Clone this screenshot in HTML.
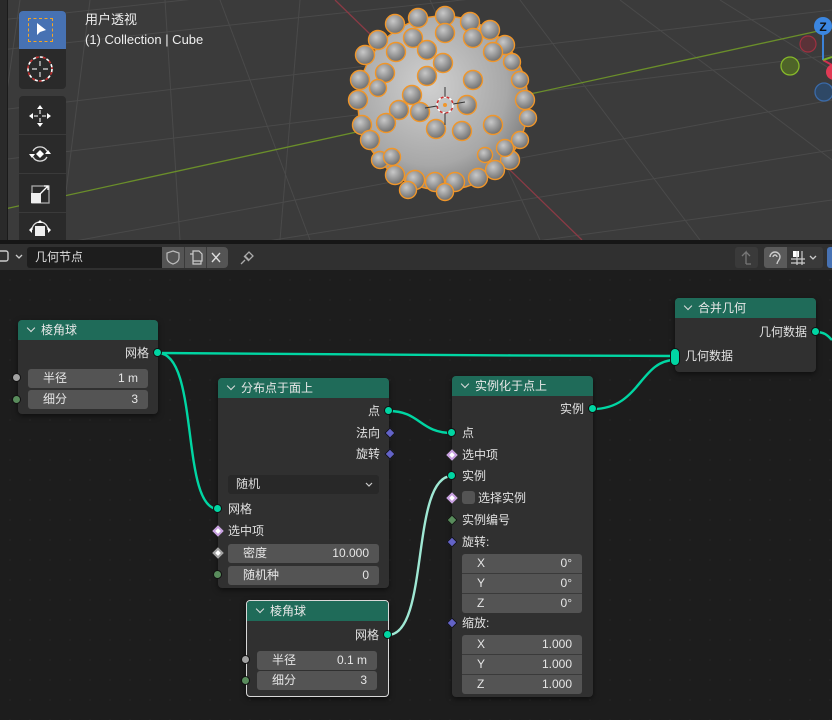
<!DOCTYPE html>
<html><head><meta charset="utf-8">
<style>
*{margin:0;padding:0;box-sizing:border-box}
body{width:832px;height:720px;overflow:hidden;background:#1d1d1d;font-family:"Liberation Sans","Noto Sans CJK SC",sans-serif;font-size:12px;color:#e0e0e0;position:relative}
.a{position:absolute}
.node{position:absolute;background:#303030;border-radius:4px;box-shadow:0 2px 6px rgba(0,0,0,.5)}
.hd{height:20px;background:#1f6b59;border-radius:4px 4px 0 0;padding-left:8px;line-height:20px;color:#e8e8e8;font-size:12px}
.hd .chev{display:inline-block;width:6px;height:6px;border-right:1.3px solid #ddd;border-bottom:1.3px solid #ddd;transform:rotate(45deg);margin:0 7px 3px 2px}
.lbl{position:absolute;line-height:14px;font-size:12px;color:#e0e0e0;white-space:nowrap}
.r{text-align:right}
.f{position:absolute;background:#545454;border-radius:3px;height:19px;line-height:19px;font-size:12px;color:#e6e6e6;padding:0 10px 0 15px}
.f span{float:right}
.s{position:absolute;width:9px;height:9px;border-radius:50%;background:#00d6a3;border:1px solid #111}
.d{position:absolute;width:8px;height:8px;transform:rotate(45deg);border:1px solid #111}
</style></head><body>
<div class="a" style="left:0;top:0;width:832px;height:240px;background:#3b3b3b;overflow:hidden">
<svg class="a" style="left:0;top:0" width="832" height="240">
<g stroke="#4a4a4a" stroke-width="1" fill="none">
<line x1="0" y1="50" x2="832" y2="-40"/><line x1="0" y1="110" x2="832" y2="10"/><line x1="0" y1="160" x2="832" y2="55"/>
<line x1="0" y1="255" x2="832" y2="100"/><line x1="150" y1="260" x2="832" y2="150"/><line x1="400" y1="260" x2="832" y2="200"/>
<line x1="0" y1="20" x2="832" y2="-70"/>
<line x1="60" y1="240" x2="90" y2="0"/><line x1="165" y1="0" x2="180" y2="240"/><line x1="280" y1="240" x2="300" y2="0"/>
<line x1="220" y1="0" x2="310" y2="240"/><line x1="520" y1="0" x2="700" y2="240"/><line x1="620" y1="0" x2="832" y2="160"/>
<line x1="720" y1="0" x2="832" y2="70"/><line x1="430" y1="0" x2="540" y2="240"/><line x1="0" y1="140" x2="20" y2="0"/>
</g>
<line x1="0" y1="210" x2="832" y2="28" stroke="#6a8e2a" stroke-width="1.3"/>
<line x1="335" y1="0" x2="582" y2="240" stroke="#8a3a45" stroke-width="1.3"/>
<defs><radialGradient id="sg" cx="0.42" cy="0.4" r="0.65"><stop offset="0" stop-color="#d0d0d0"/><stop offset="0.7" stop-color="#a8a8a8"/><stop offset="1" stop-color="#7a7a7a"/></radialGradient>
<radialGradient id="bg" cx="0.4" cy="0.35" r="0.7"><stop offset="0" stop-color="#c8c8c8"/><stop offset="1" stop-color="#6a6a6a"/></radialGradient></defs>
<ellipse cx="443" cy="103" rx="85" ry="87" fill="url(#sg)" stroke="#f0962a" stroke-width="1.5"/>
<g fill="url(#bg)" stroke="#f0962a" stroke-width="1.4">
<circle cx="418" cy="18" r="9.5"/><circle cx="445" cy="16" r="9.5"/><circle cx="470" cy="22" r="9.5"/><circle cx="490" cy="30" r="9.5"/><circle cx="395" cy="24" r="9.5"/><circle cx="378" cy="40" r="9.5"/>
<circle cx="505" cy="45" r="9.5"/><circle cx="512" cy="62" r="8.5"/><circle cx="365" cy="55" r="9.5"/><circle cx="360" cy="80" r="9.5"/><circle cx="358" cy="100" r="9.5"/>
<circle cx="520" cy="80" r="8.5"/><circle cx="525" cy="100" r="9.5"/><circle cx="528" cy="118" r="8.5"/><circle cx="362" cy="125" r="9.5"/><circle cx="370" cy="140" r="9.5"/>
<circle cx="520" cy="140" r="8.5"/><circle cx="510" cy="160" r="9.5"/><circle cx="380" cy="160" r="8.5"/><circle cx="395" cy="175" r="9.5"/><circle cx="415" cy="180" r="9.5"/>
<circle cx="435" cy="182" r="9.5"/><circle cx="455" cy="182" r="9.5"/><circle cx="478" cy="178" r="9.5"/><circle cx="495" cy="170" r="9.5"/><circle cx="408" cy="190" r="8.5"/><circle cx="445" cy="192" r="8.5"/>
<circle cx="413" cy="38" r="9.5"/><circle cx="445" cy="33" r="9.5"/><circle cx="473" cy="38" r="9.5"/><circle cx="396" cy="52" r="9.5"/><circle cx="427" cy="50" r="9.5"/><circle cx="493" cy="52" r="9.5"/>
<circle cx="427" cy="76" r="9.5"/><circle cx="443" cy="63" r="9.5"/><circle cx="385" cy="73" r="9.5"/><circle cx="473" cy="80" r="9.5"/><circle cx="412" cy="95" r="9.5"/>
<circle cx="399" cy="110" r="9.5"/><circle cx="420" cy="112" r="9.5"/><circle cx="467" cy="105" r="9.5"/><circle cx="386" cy="123" r="9.5"/><circle cx="436" cy="129" r="9.5"/>
<circle cx="462" cy="131" r="9.5"/><circle cx="493" cy="125" r="9.5"/><circle cx="378" cy="88" r="8.5"/><circle cx="505" cy="148" r="8.5"/><circle cx="485" cy="155" r="7.5"/><circle cx="392" cy="157" r="8.5"/>
</g>
<circle cx="445" cy="105" r="8" fill="none" stroke="#fff" stroke-width="1.5" stroke-dasharray="3 3"/>
<circle cx="445" cy="105" r="8" fill="none" stroke="#d03030" stroke-width="1.5" stroke-dasharray="3 3" stroke-dashoffset="3"/>
<circle cx="445" cy="105" r="2" fill="#f0962a"/>
<g stroke="#333" stroke-width="1"><line x1="445" y1="87" x2="445" y2="97"/><line x1="445" y1="113" x2="445" y2="125"/><line x1="425" y1="108" x2="437" y2="106"/><line x1="453" y1="104" x2="465" y2="102"/></g>
<line x1="823" y1="26" x2="823" y2="60" stroke="#3b82d8" stroke-width="2"/>
<line x1="823" y1="60" x2="832" y2="65" stroke="#d03050" stroke-width="2"/>
<line x1="823" y1="60" x2="832" y2="57" stroke="#7ab02a" stroke-width="2"/>
<circle cx="808" cy="44" r="8" fill="#5a3238" stroke="#a03040" stroke-width="1.2"/>
<circle cx="790" cy="66" r="9" fill="#4e6428" stroke="#86b82a" stroke-width="1.3"/>
<circle cx="824" cy="92" r="9" fill="#2e4866" stroke="#3a6aa8" stroke-width="1.3"/>
<circle cx="834" cy="72" r="8" fill="#e03a55"/>
<circle cx="823" cy="26" r="9" fill="#3b86e0"/>
<text x="823" y="31" font-size="12" font-weight="bold" fill="#111" text-anchor="middle" font-family="Liberation Sans">Z</text>
</svg>
<div class="a" style="left:0;top:0;width:8px;height:240px;background:#2a2a2a;border-right:1px solid #1a1a1a"></div>
<div class="a" style="left:85px;top:12px;font-size:13px;color:#eee;line-height:16px">用户透视</div>
<div class="a" style="left:85px;top:32px;font-size:13px;color:#eee;line-height:16px">(1) Collection | Cube</div>
<div class="a" style="left:19px;top:11px;width:47px;height:78px;background:#2a2a2a;border-radius:4px"></div>
<div class="a" style="left:19px;top:11px;width:47px;height:38px;background:#4772b3;border-radius:4px 4px 0 0"></div>
<div class="a" style="left:28px;top:18px;width:25px;height:24px;border:1.5px dashed #f5a623"></div>
<svg class="a" style="left:35px;top:22px" width="12" height="14"><path d="M2 1 L2 13 L5 10 L11 8 Z" fill="#fff"/></svg>
<svg class="a" style="left:26px;top:55px" width="28" height="28"><circle cx="14" cy="14" r="12" fill="none" stroke="#fff" stroke-width="1.6" stroke-dasharray="4 3"/><circle cx="14" cy="14" r="12" fill="none" stroke="#c03030" stroke-width="1.6" stroke-dasharray="3 4" stroke-dashoffset="4"/><path d="M14 6v5M14 17v5M6 14h5M17 14h5" stroke="#ddd" stroke-width="1.2"/></svg>
<div class="a" style="left:19px;top:96px;width:47px;height:150px;background:#2a2a2a;border-radius:4px"></div>
<div class="a" style="left:19px;top:134px;width:47px;height:1px;background:#3a3a3a"></div>
<div class="a" style="left:19px;top:173px;width:47px;height:1px;background:#3a3a3a"></div>
<div class="a" style="left:19px;top:212px;width:47px;height:1px;background:#3a3a3a"></div>
<svg class="a" style="left:26px;top:102px" width="28" height="28"><path d="M14 3l-3 4h6zM14 25l-3-4h6zM3 14l4-3v6zM25 14l-4-3v6z" fill="#fff"/><path d="M14 8v4M14 16v4M8 14h4M16 14h4" stroke="#ddd" stroke-width="1.3"/></svg>
<svg class="a" style="left:26px;top:140px" width="28" height="28"><path d="M7 11a8 8 0 0 1 14 0M21 17a8 8 0 0 1-14 0" fill="none" stroke="#ddd" stroke-width="1.3"/><path d="M14 10l4 4-4 4-4-4z M3 14h6l-3 4z M19 14h6l-3-4z" fill="#fff"/></svg>
<svg class="a" style="left:26px;top:180px" width="28" height="28"><rect x="6" y="6" width="17" height="17" fill="none" stroke="#aaa" stroke-width="1.3"/><rect x="5" y="13" width="10" height="10" fill="#eee"/><path d="M14 14l8-8M18 6h4v4" stroke="#fff" stroke-width="1.3" fill="none"/></svg>
<svg class="a" style="left:26px;top:218px" width="28" height="24"><path d="M6 12a8 8 0 0 1 16 0" fill="none" stroke="#ddd" stroke-width="1.3"/><rect x="9" y="8" width="10" height="10" fill="#eee"/><path d="M14 2l-3 3h6zM3 12l3-3v6zM25 12l-3-3v6z" fill="#fff"/></svg>
</div>
<div class="a" style="left:0;top:240px;width:832px;height:4px;background:#161616"></div>
<div class="a" style="left:0;top:244px;width:832px;height:26px;background:#303030"></div>
<svg class="a" style="left:0;top:249px" width="26" height="16"><rect x="-4" y="2" width="12" height="10" rx="2" fill="none" stroke="#ccc" stroke-width="1.4"/><path d="M16 6l3 3 3-3" fill="none" stroke="#ccc" stroke-width="1.3"/></svg>
<div class="a" style="left:27px;top:247px;width:135px;height:21px;background:#1d1d1d;border-radius:3px 0 0 3px;padding-left:8px;line-height:21px;font-size:12px;color:#ddd">几何节点</div>
<div class="a" style="left:162px;top:247px;width:66px;height:21px;background:#545454;border-radius:0 4px 4px 0"></div>
<div class="a" style="left:184px;top:247px;width:1px;height:21px;background:#3a3a3a"></div>
<div class="a" style="left:206px;top:247px;width:1px;height:21px;background:#3a3a3a"></div>
<svg class="a" style="left:162px;top:247px" width="66" height="21"><path d="M11 4l6 2v5c0 3-3 5-6 6-3-1-6-3-6-6V6z" fill="none" stroke="#bbb" stroke-width="1.2"/><path d="M28 7h3v10h8v-3M31 4h6l3 3v7h-9z" fill="none" stroke="#ccc" stroke-width="1.2"/><path d="M50 6l8 9M58 6l-8 9" stroke="#ddd" stroke-width="1.4"/></svg>
<svg class="a" style="left:236px;top:249px" width="20" height="18"><path d="M5 15l4-4M8 7l5 5M9 7l4-4 4 4-4 4z" fill="none" stroke="#aaa" stroke-width="1.3"/></svg>
<div class="a" style="left:735px;top:247px;width:23px;height:21px;background:#3a3a3a;border-radius:3px"></div>
<svg class="a" style="left:735px;top:247px" width="23" height="21"><path d="M11 17V5l-4 4M11 5l4 4M11 17h5" fill="none" stroke="#777" stroke-width="1.3"/></svg>
<div class="a" style="left:764px;top:247px;width:23px;height:21px;background:#5a5a5a;border-radius:3px 0 0 3px"></div>
<div class="a" style="left:787px;top:247px;width:36px;height:21px;background:#3a3a3a;border-radius:0 3px 3px 0"></div>
<svg class="a" style="left:764px;top:247px" width="60" height="21"><path d="M6 10a5 5 0 0 1 10 0c0 3-3 4-3 7M9 10a2 2 0 0 1 4 0" fill="none" stroke="#ccc" stroke-width="1.4"/><rect x="29" y="4" width="6" height="6" fill="#fff"/><path d="M33 4v14M38 4v14M27 12h14M27 16h14" stroke="#ccc" stroke-width="1.2"/><path d="M46 9l3 3 3-3" fill="none" stroke="#ccc" stroke-width="1.3"/></svg>
<div class="a" style="left:827px;top:247px;width:10px;height:21px;background:#4772b3;border-radius:3px"></div>
<svg class="a" style="left:0;top:270px" width="832" height="450">
<defs><pattern id="dp" width="20" height="20" patternUnits="userSpaceOnUse"><circle cx="10" cy="10" r="0.9" fill="#262626"/></pattern></defs>
<rect width="832" height="450" fill="url(#dp)"/>
</svg>
<svg class="a" style="left:0;top:0;z-index:1" width="832" height="720">
<g fill="none" stroke-width="2.4">
<path d="M158 353 C 400 354, 500 356, 675 356" stroke="#00d6a3"/>
<path d="M158 353 C 200 353, 180 509, 218 509" stroke="#00d6a3"/>
<path d="M389 411 C 420 411, 420 433, 452 433" stroke="#00d6a3"/>
<path d="M593 409 C 640 409, 640 360, 675 360" stroke="#00d6a3"/>
<path d="M816 332 C 825 332, 828 336, 832 340" stroke="#00d6a3"/>
<path d="M388 635 C 430 635, 410 476, 452 476" stroke="#9fe8d4"/>
</g>
</svg>
<div class="node" style="left:18px;top:320px;width:140px;height:94px">
<div class="hd"><span class="chev"></span>棱角球</div>
<div class="lbl r" style="right:9px;top:26px">网格</div>
<div class="f" style="left:10px;top:49px;width:120px">半径<span>1 m</span></div>
<div class="f" style="left:10px;top:70px;width:120px">细分<span>3</span></div>
</div>
<div class="node" style="left:218px;top:378px;width:171px;height:210px">
<div class="hd"><span class="chev"></span>分布点于面上</div>
<div class="lbl r" style="right:9px;top:26px">点</div>
<div class="lbl r" style="right:9px;top:48px">法向</div>
<div class="lbl r" style="right:9px;top:69px">旋转</div>
<div class="a" style="left:10px;top:97px;width:151px;height:19px;background:#282828;border-radius:3px;line-height:19px;padding-left:8px;color:#ddd">随机<svg style="position:absolute;right:6px;top:7px" width="8" height="6"><path d="M1 1l3 3 3-3" fill="none" stroke="#ccc" stroke-width="1.2"/></svg></div>
<div class="lbl" style="left:10px;top:124px">网格</div>
<div class="lbl" style="left:10px;top:146px">选中项</div>
<div class="f" style="left:10px;top:166px;width:151px">密度<span>10.000</span></div>
<div class="f" style="left:10px;top:188px;width:151px">随机种<span>0</span></div>
</div>
<div class="node" style="left:452px;top:376px;width:141px;height:321px">
<div class="hd"><span class="chev"></span>实例化于点上</div>
<div class="lbl r" style="right:9px;top:26px">实例</div>
<div class="lbl" style="left:10px;top:50px">点</div>
<div class="lbl" style="left:10px;top:72px">选中项</div>
<div class="lbl" style="left:10px;top:93px">实例</div>
<div class="a" style="left:10px;top:115px;width:13px;height:13px;background:#545454;border-radius:3px"></div>
<div class="lbl" style="left:26px;top:115px">选择实例</div>
<div class="lbl" style="left:10px;top:137px">实例编号</div>
<div class="lbl" style="left:10px;top:159px">旋转:</div>
<div class="f" style="left:10px;top:178px;width:120px;border-radius:3px 3px 0 0">X<span>0°</span></div>
<div class="f" style="left:10px;top:198px;width:120px;border-radius:0">Y<span>0°</span></div>
<div class="f" style="left:10px;top:218px;width:120px;border-radius:0 0 3px 3px">Z<span>0°</span></div>
<div class="lbl" style="left:10px;top:240px">缩放:</div>
<div class="f" style="left:10px;top:259px;width:120px;border-radius:3px 3px 0 0">X<span>1.000</span></div>
<div class="f" style="left:10px;top:279px;width:120px;border-radius:0">Y<span>1.000</span></div>
<div class="f" style="left:10px;top:299px;width:120px;border-radius:0 0 3px 3px">Z<span>1.000</span></div>
</div>
<div class="a" style="left:462px;top:573px;width:120px;height:1px;background:#3a3a3a;z-index:2"></div>
<div class="a" style="left:462px;top:593px;width:120px;height:1px;background:#3a3a3a;z-index:2"></div>
<div class="a" style="left:462px;top:654px;width:120px;height:1px;background:#3a3a3a;z-index:2"></div>
<div class="a" style="left:462px;top:674px;width:120px;height:1px;background:#3a3a3a;z-index:2"></div>
<div class="node" style="left:675px;top:298px;width:141px;height:74px">
<div class="hd"><span class="chev"></span>合并几何</div>
<div class="lbl r" style="right:9px;top:27px">几何数据</div>
<div class="lbl" style="left:10px;top:51px">几何数据</div>
</div>
<div class="node" style="left:246px;top:600px;width:143px;height:97px;border:1px solid #d8d8d8">
<div class="hd" style="border-radius:3px 3px 0 0"><span class="chev"></span>棱角球</div>
<div class="lbl r" style="right:9px;top:27px">网格</div>
<div class="f" style="left:10px;top:50px;width:120px">半径<span>0.1 m</span></div>
<div class="f" style="left:10px;top:70px;width:120px">细分<span>3</span></div>
</div>
<div style="position:absolute;left:0;top:0;z-index:5">
<div class="s" style="left:153px;top:348px"></div>
<div class="s" style="left:12px;top:373px;background:#a1a1a1"></div>
<div class="s" style="left:12px;top:395px;background:#598c5c"></div>
<div class="s" style="left:384px;top:406px"></div>
<div class="d" style="left:386px;top:429px;background:#6363c7"></div>
<div class="d" style="left:386px;top:450px;background:#6363c7"></div>
<div class="s" style="left:213px;top:504px"></div>
<div class="d" style="left:214px;top:527px;background:#fff;border:2px solid #c79ee0"></div>
<div class="d" style="left:214px;top:549px;background:#fff;border:2px solid #a0a0a0"></div>
<div class="s" style="left:213px;top:570px;background:#598c5c"></div>
<div class="s" style="left:588px;top:404px"></div>
<div class="s" style="left:447px;top:428px"></div>
<div class="d" style="left:448px;top:451px;background:#fff;border:2px solid #c79ee0"></div>
<div class="s" style="left:447px;top:471px"></div>
<div class="d" style="left:448px;top:494px;background:#fff;border:2px solid #c79ee0"></div>
<div class="d" style="left:448px;top:516px;background:#598c5c"></div>
<div class="d" style="left:448px;top:538px;background:#6363c7"></div>
<div class="d" style="left:448px;top:619px;background:#6363c7"></div>
<div class="s" style="left:811px;top:327px"></div>
<div class="a" style="left:670px;top:348px;width:10px;height:18px;border-radius:5px;background:#00d6a3;border:1px solid #111"></div>
<div class="s" style="left:383px;top:630px"></div>
<div class="s" style="left:241px;top:655px;background:#a1a1a1"></div>
<div class="s" style="left:241px;top:676px;background:#598c5c"></div>
</div>
</body></html>
